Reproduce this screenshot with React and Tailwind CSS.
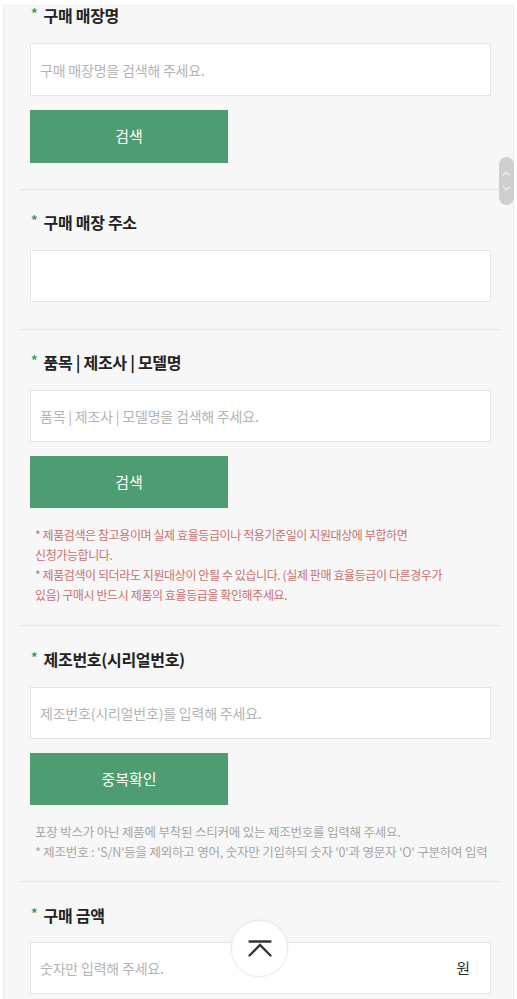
import React from "react";

const green = "bg-[#4e9c72]";

function Label({ children }) {
  return (
    <div className="flex items-center h-[22px] pl-[1px]">
      <span className="text-[#3f9a5f] text-[13px] font-bold leading-none mr-[6px] -mt-[6px]">*</span>
      <span className="text-[16px] font-bold text-[#222] tracking-[-0.3px]">{children}</span>
    </div>
  );
}

function Field({ placeholder, suffix, tall, mt = "mt-[17px]" }) {
  return (
    <div className={`${mt} flex items-center ${tall ? "h-[53px]" : "h-[52px]"} bg-white border border-[#e4e4e4]`}>
      <input
        className="flex-1 h-full pl-[9px] bg-transparent outline-none text-[14px] text-[#333] placeholder:text-[#b4b4b4] tracking-[-0.2px]"
        placeholder={placeholder}
      />
      {suffix && <span className="pr-[20px] text-[15px] text-[#333]">{suffix}</span>}
    </div>
  );
}

function GreenButton({ children, tall }) {
  return (
    <button className={`mt-[14px] w-[198px] ${tall ? "h-[53px]" : "h-[52px]"} ${green} text-white text-[15px] block`}>
      {children}
    </button>
  );
}

function Section({ children, pt, pb, last }) {
  return (
    <div className={`${pt} ${pb} ${last ? "" : "border-b border-[#e6e6e6]"} pl-[10px] pr-[9px]`}>
      {children}
    </div>
  );
}

export default function App() {
  return (
    <div className="relative h-[999px] overflow-hidden bg-white font-['Noto_Sans_CJK_KR','Noto_Sans',sans-serif]">
      <div className="ml-[3px] mt-[4px] w-[511px] min-h-[1000px] bg-[#f7f7f7] border-x border-[#ececec] pl-[16px] pr-[13px]">
        <Section pt="pt-0" pb="pb-[26px]">
          <Label>구매 매장명</Label>
          <Field placeholder="구매 매장명을 검색해 주세요." tall mt="mt-[17px]" />
          <GreenButton tall>검색</GreenButton>
        </Section>

        <Section pt="pt-[21px]" pb="pb-[27px]">
          <Label>구매 매장 주소</Label>
          <Field placeholder="" />
        </Section>

        <Section pt="pt-[21px]" pb="pb-[20px]">
          <Label>품목 | 제조사 | 모델명</Label>
          <Field placeholder="품목 | 제조사 | 모델명을 검색해 주세요." />
          <GreenButton>검색</GreenButton>
          <div className="mt-[17px] pl-[5px] text-[12px] leading-[20px] text-[#c8716f] tracking-[-0.4px] whitespace-nowrap">
            <p>* 제품검색은 참고용이며 실제 효율등급이나 적용기준일이 지원대상에 부합하면</p>
            <p>신청가능합니다.</p>
            <p>* 제품검색이 되더라도 지원대상이 안될 수 있습니다. (실제 판매 효율등급이 다른경우가</p>
            <p>있음) 구매시 반드시 제품의 효율등급을 확인해주세요.</p>
          </div>
        </Section>

        <Section pt="pt-[22px]" pb="pb-[19px]">
          <Label>제조번호(시리얼번호)</Label>
          <Field placeholder="제조번호(시리얼번호)를 입력해 주세요." />
          <GreenButton>중복확인</GreenButton>
          <div className="mt-[17px] pl-[5px] text-[12.5px] leading-[20px] text-[#a5a5a5] tracking-[-0.2px] whitespace-nowrap">
            <p>포장 박스가 아닌 제품에 부착된 스티커에 있는 제조번호를 입력해 주세요.</p>
            <p>* 제조번호 : 'S/N'등을 제외하고 영어, 숫자만 기입하되 숫자 '0'과 영문자 'O' 구분하여 입력</p>
          </div>
        </Section>

        <Section pt="pt-[22px]" pb="pb-0" last>
          <Label>구매 금액</Label>
          <Field placeholder="숫자만 입력해 주세요." suffix="원" mt="mt-[16px]" />
        </Section>
      </div>

      {/* scroll pill */}
      <div className="absolute left-[499px] top-[157px] w-[15px] h-[48px] rounded-full bg-[#cfcfcf] flex flex-col items-center justify-center gap-[10px]">
        <svg width="9" height="5" viewBox="0 0 9 5" fill="none" stroke="#f0f0f0" strokeWidth="1.2">
          <path d="M1 4.5 L4.5 1 L8 4.5" />
        </svg>
        <svg width="9" height="5" viewBox="0 0 9 5" fill="none" stroke="#f0f0f0" strokeWidth="1.2">
          <path d="M1 0.5 L4.5 4 L8 0.5" />
        </svg>
      </div>

      {/* top button */}
      <button className="absolute left-[231px] top-[920px] w-[57px] h-[57px] rounded-full bg-white border border-[#ececec] shadow-[0_0_3px_rgba(0,0,0,0.05)] flex items-center justify-center">
        <svg width="24" height="17" viewBox="0 0 24 17" fill="none" stroke="#333" strokeWidth="2.3" strokeLinecap="round">
          <path d="M1.5 1.5 H22.5" />
          <path d="M1.5 15.5 L12 5 L22.5 15.5" />
        </svg>
      </button>
    </div>
  );
}
